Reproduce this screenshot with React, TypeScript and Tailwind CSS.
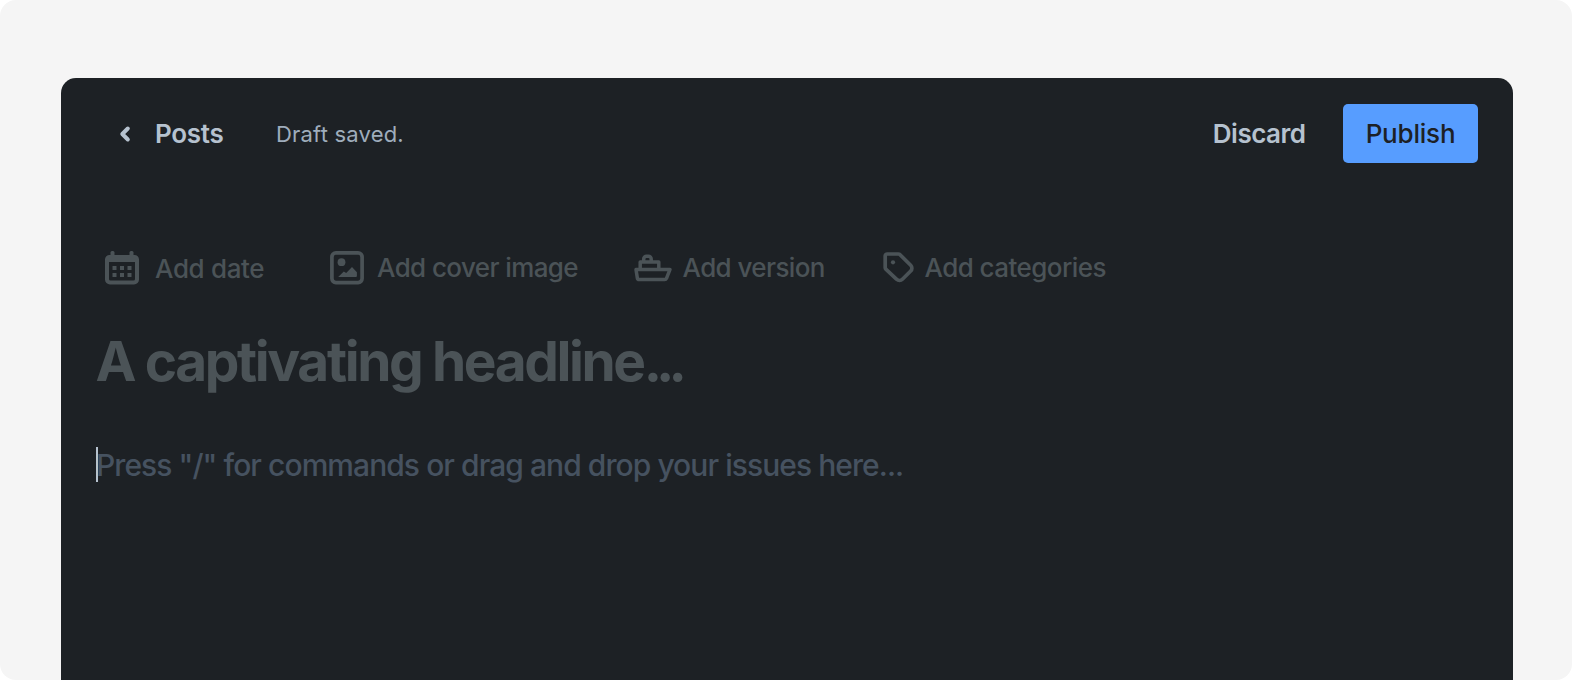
import type { ReactNode } from "react";

function CalendarIcon() {
  return (
    <svg className="h-[34px] w-[34px]" viewBox="0 0 34 34" fill="currentColor">
      <rect x="5.500" y="0" width="4" height="8" rx="1.500" />
      <rect x="24.500" y="0" width="4" height="8" rx="1.500" />
      <path fillRule="evenodd" d="M4.500 4h25A4.500 4.500 0 0 1 34 8.500v20a5 5 0 0 1-5 5H5a5 5 0 0 1-5-5v-20A4.500 4.500 0 0 1 4.500 4ZM4 11v17a1.500 1.500 0 0 0 1.500 1.500h23A1.500 1.500 0 0 0 30 28V11H4Z" />
      <path d="M7.500 15h4v4h-4zM15 15h4v4h-4zM22.500 15h4v4h-4zM7.500 22h4v4h-4zM15 22h4v4h-4zM22.500 22h4v4h-4z" />
    </svg>
  );
}

function ImageIcon() {
  return (
    <svg className="h-[34px] w-[34px]" viewBox="0 0 34 34" fill="currentColor">
      <rect x="1.900" y="1.900" width="30.200" height="29.700" rx="4" fill="none" stroke="currentColor" strokeWidth="3.700" />
      <circle cx="11.500" cy="11.200" r="3.900" />
      <path d="M8.200 26 13.800 20.400l2.400 1.500 5.800-5.900 4.900 5.200V25a1 1 0 0 1-1 1Z" />
    </svg>
  );
}

function ShipIcon() {
  return (
    <svg className="h-[28px] w-[38px]" viewBox="0 0 38 28" fill="none" stroke="currentColor" strokeWidth="3.500" strokeLinejoin="round">
      <path d="M2 15.400h34l-3.500 9a2 2 0 0 1-1.900 1.200H5.300a2 2 0 0 1-2-1.800L2 15.400ZM6.200 15.400V8h18.600v7.400M9.700 8V5a2.800 2.800 0 0 1 2.800-2.800h1.900A2.800 2.800 0 0 1 17.200 5v3" />
    </svg>
  );
}

function TagIcon() {
  return (
    <svg className="h-[31px] w-[31px]" viewBox="0 0 31 31" fill="none" stroke="currentColor" strokeWidth="3.700" strokeLinejoin="round">
      <path d="M2.200 4a2 2 0 0 1 2-2h11.300a2 2 0 0 1 1.300.5l10.900 10.800a4 4 0 0 1 0 5.700l-8.300 8.300a4 4 0 0 1-5.700 0L2.800 17.200a2 2 0 0 1-.6-1.400V4Z" />
      <circle cx="10" cy="10.300" r="2.100" fill="currentColor" stroke="none" />
    </svg>
  );
}

function Field({ icon, label, className }: { icon: ReactNode; label: string; className: string }) {
  return (
    <button className={`flex h-[34px] shrink-0 items-center text-left text-[26px] leading-8 font-[450] whitespace-nowrap ${className}`}>
      {icon}
      <span>{label}</span>
    </button>
  );
}

export default function App() {
  return (
    <div className="h-[680px] w-[1572px] overflow-hidden rounded-2xl bg-[#f5f5f5] pt-[77.5px] pr-[59px] pl-[60.5px] font-['Inter',sans-serif]">
      <main className="h-[603px] rounded-t-[15px] bg-[#1d2125] text-[#b6c2cf]">
        <header className="flex h-[112px] items-center pr-[35px] pl-[59.5px]">
          <svg className="h-4 w-3 shrink-0 overflow-visible" viewBox="0 0 12 16" fill="none" stroke="currentColor" strokeWidth="4" strokeLinecap="round" strokeLinejoin="round">
            <path d="M7.800 2.500 2.300 8l5.500 5.500" />
          </svg>
          <span className="ml-[23px] w-[121px] text-[26px] font-semibold tracking-[-0.3px]">Posts</span>
          <span className="pt-px text-[22px] tracking-[0.2px] text-[#9fadbc]">Draft saved.</span>
          <span className="ml-auto text-[26px] font-semibold tracking-[-0.5px]">Discard</span>
          <button className="ml-[37.5px] h-[59px] w-[135px] rounded-[5px] bg-[#579dff] text-[26px] font-medium tracking-[-0.2px] text-[#1d2125]">Publish</button>
        </header>
        <div className="flex pt-[61px] pl-[44.5px] text-[#4b5357]">
          <Field className="w-[225px] gap-[16px] tracking-[-0.35px] [&>span]:pt-0.5" icon={<CalendarIcon />} label="Add date" />
          <Field className="w-[304px] gap-[13px] tracking-[-0.6px]" icon={<ImageIcon />} label="Add cover image" />
          <Field className="w-[249px] gap-[10.5px] tracking-[-0.6px]" icon={<ShipIcon />} label="Add version" />
          <Field className="gap-[10.5px] tracking-[-0.55px]" icon={<TagIcon />} label="Add categories" />
        </div>
        <h1 className="mt-[43.5px] pl-[35px] text-[55px] leading-[66px] font-bold tracking-[-2.4px] text-[#4b5357]">
          A captivating headline<span className="tracking-[-6px]">...</span>
        </h1>
        <div className="mt-[52.5px] ml-[35.5px] flex h-[35px] items-center border-l-2 border-[#b6c2cf] text-[30px] font-[450] tracking-[-0.94px] text-[#465260]">
          <p className="-ml-[2px] pt-0.5 whitespace-nowrap">Press "/" for commands or drag and drop your issues here...</p>
        </div>
      </main>
    </div>
  );
}
